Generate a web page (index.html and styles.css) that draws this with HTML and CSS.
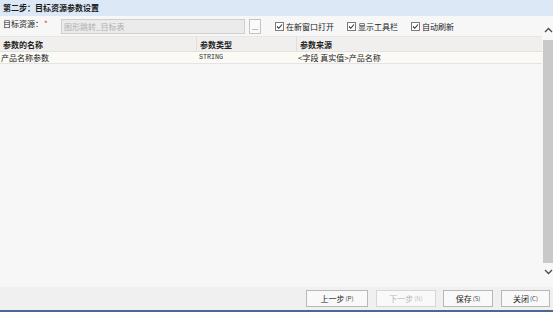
FILE: index.html
```html
<!DOCTYPE html>
<html lang="zh">
<head>
<meta charset="utf-8">
<link rel="stylesheet" href="styles.css">
</head>
<body>
<div class="page">
  <div class="title">第二步：目标资源参数设置</div>
  <div class="main">
    <div class="content">
      <div class="toolbar">
        <span class="label">目标资源：</span><span class="req">*</span>
        <div class="input">图形跳转_目标表</div>
        <div class="dots">...</div>
        <label class="chk chk1"><svg class="box" width="9" height="9" viewBox="0 0 9 9"><rect x="0.5" y="0.5" width="8" height="8" fill="#fff" stroke="#7b7b7b"/><polyline points="2,4.5 3.8,6.3 7,2.5" fill="none" stroke="#333" stroke-width="1.1"/></svg>在新窗口打开</label>
        <label class="chk chk2"><svg class="box" width="9" height="9" viewBox="0 0 9 9"><rect x="0.5" y="0.5" width="8" height="8" fill="#fff" stroke="#7b7b7b"/><polyline points="2,4.5 3.8,6.3 7,2.5" fill="none" stroke="#333" stroke-width="1.1"/></svg>显示工具栏</label>
        <label class="chk chk3"><svg class="box" width="9" height="9" viewBox="0 0 9 9"><rect x="0.5" y="0.5" width="8" height="8" fill="#fff" stroke="#7b7b7b"/><polyline points="2,4.5 3.8,6.3 7,2.5" fill="none" stroke="#333" stroke-width="1.1"/></svg>自动刷新</label>
      </div>
      <div class="table">
        <div class="row head">
          <div class="c1">参数的名称</div>
          <div class="c2">参数类型</div>
          <div class="c3">参数来源</div>
        </div>
        <div class="row data">
          <div class="c1">产品名称参数</div>
          <div class="c2 mono">STRING</div>
          <div class="c3">&lt;字段 真实值&gt;产品名称</div>
        </div>
      </div>
    </div>
    <div class="scroll">
      <div class="sbtn up"><svg width="9" height="6" viewBox="0 0 9 6"><polyline points="1,5 4.5,1.5 8,5" fill="none" stroke="#4a4a4a" stroke-width="1.3"/></svg></div>
      <div class="track"></div>
      <div class="sbtn down"><svg width="9" height="6" viewBox="0 0 9 6"><polyline points="1,1 4.5,4.5 8,1" fill="none" stroke="#4a4a4a" stroke-width="1.3"/></svg></div>
    </div>
  </div>
  <div class="footer">
    <div class="btn b1">上一步<span class="key">(P)</span></div>
    <div class="btn b2 disabled">下一步<span class="key">(N)</span></div>
    <div class="btn b3">保存<span class="key">(S)</span></div>
    <div class="btn b4">关闭<span class="key">(C)</span></div>
  </div>
  <div class="strip"></div>
</div>
</body>
</html>
```
FILE: styles.css
```css
* { box-sizing: border-box; }
html, body { margin: 0; padding: 0; }
body {
  width: 553px;
  height: 312px;
  overflow: hidden;
  background: #f7f7f7;
  font-family: "Noto Sans CJK SC", "Noto Sans", sans-serif;
  font-size: 8px;
  color: #222;
}
.page {
  width: 553px;
  height: 312px;
  display: flex;
  flex-direction: column;
}
.title {
  height: 16px;
  line-height: 16px;
  background: #dce8f6;
  font-weight: bold;
  padding-left: 3px;
  color: #1a1a1a;
  flex: none;
}
.main {
  flex: 1;
  display: flex;
  min-height: 0;
}
.content {
  flex: 1;
  display: flex;
  flex-direction: column;
}
.toolbar {
  height: 20px;
  display: flex;
  align-items: center;
  padding-left: 3px;
}
.label { line-height: 10px; margin-top: -4px; }
.req { color: #e03030; margin-left: 1px; margin-top: -5px; width: 17px; }
.input {
  width: 184px;
  height: 15px;
  background: #ebebeb;
  border: 1px solid #cfcfcf;
  color: #b0b0b0;
  line-height: 13px;
  padding-left: 2px;
}
.dots {
  width: 12px;
  height: 15px;
  margin-left: 4px;
  border: 1px solid #c4c4c4;
  background: #fafafa;
  color: #555;
  font-size: 7px;
  line-height: 14px;
  text-align: center;
}
.chk {
  display: flex;
  align-items: center;
  color: #222;
}
.box { margin-right: 2px; }
.chk1 { margin-left: 14px; }
.chk2 { margin-left: 13px; }
.chk3 { margin-left: 13px; }
.row {
  display: flex;
}
.head {
  height: 16px;
  line-height: 16px;
  background: #f0efee;
  border-top: 1px solid #e6e6e6;
  border-bottom: 1px solid #e2e2e2;
  font-weight: bold;
}
.head .c1 { padding-left: 3px; }
.head .c2 { border-left: 1px solid #dedede; padding-left: 3px; }
.head .c3 { border-left: 1px solid #dedede; padding-left: 3px; }
.data {
  height: 12px;
  line-height: 11px;
  background: #fbfaf4;
  border-bottom: 1px solid #e4e4e4;
}
.data .c1 { padding-left: 1px; }
.data .c2 { padding-left: 2px; border-left: 1px solid transparent; }
.data .c3 { padding-left: 1px; border-left: 1px solid transparent; }
.c1 { width: 196px; }
.c2 { width: 100px; }
.c3 { flex: 1; }
.mono {
  font-family: "Liberation Mono", monospace;
  font-size: 6.7px;
  color: #333;
}
.scroll {
  width: 11px;
  display: flex;
  flex-direction: column;
  padding-left: 1px;
}
.sbtn {
  height: 24px;
  display: flex;
  justify-content: center;
}
.up { align-items: flex-end; padding-bottom: 7px; }
.down { align-items: flex-start; padding-top: 6px; }
.track {
  flex: 1;
  background: #c9c9c9;
}
.footer {
  height: 23px;
  background: #f0f0f0;
  display: flex;
  justify-content: flex-end;
  align-items: flex-start;
  padding-top: 3px;
  padding-right: 3px;
  gap: 8px;
  flex: none;
}
.btn {
  height: 17px;
  border: 1px solid #b8b8b8;
  background: #f9f9f9;
  display: flex;
  align-items: center;
  justify-content: center;
  color: #222;
}
.key { font-size: 6px; margin-left: 1px; color: #444; }
.b1 { width: 62px; }
.b2 { width: 60px; }
.b3 { width: 50px; margin-left: -1px; }
.b4 { width: 49px; }
.disabled { color: #b5b5b5; border-color: #d6d6d6; }
.disabled .key { color: #c0c0c0; }
.strip {
  height: 2px;
  background: #4a6890;
  flex: none;
}
```
